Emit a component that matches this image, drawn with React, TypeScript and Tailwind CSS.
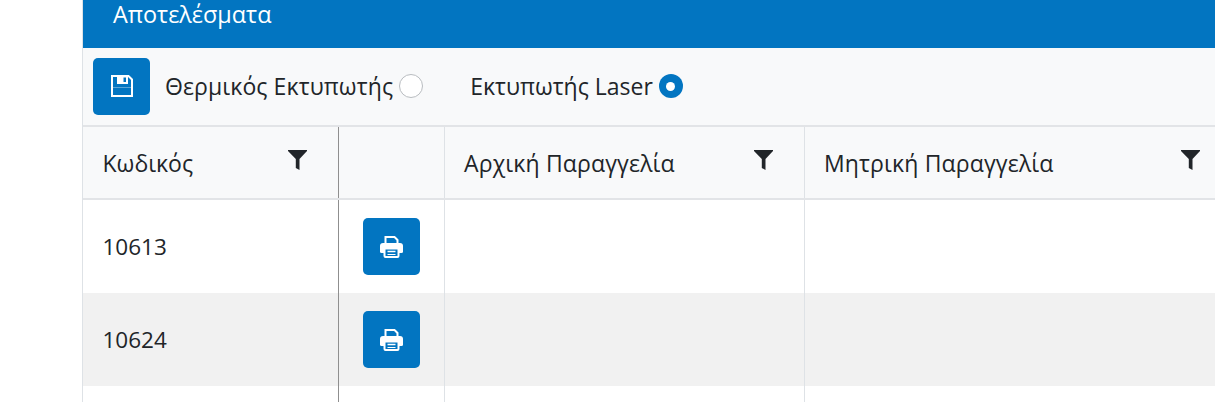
const blue = "bg-[#0275c1]";

function SaveIcon() {
  return (
    <svg width="24" height="24" viewBox="0 0 24 24" aria-hidden="true">
      <path d="M2 2H18.5L22 5.5V22H2Z" fill="none" stroke="#fff" strokeWidth="2" />
      <path d="M7 2H18V10H7Z" fill="#fff" />
      <path d="M13.5 3.5H16V8H13.5Z" fill="#0275c1" />
      <path d="M2 13.5H22" stroke="#fff" strokeWidth="1" opacity="0.35" />
    </svg>
  );
}

function PrintIcon() {
  return (
    <svg width="23" height="22" viewBox="0 0 23 22" aria-hidden="true">
      <path d="M5.5 9V1H14.5L17.5 4V9" fill="none" stroke="#fff" strokeWidth="2" />
      <path d="M3 7H20A3 3 0 0 1 23 10V15.5A1.5 1.5 0 0 1 21.5 17H1.5A1.5 1.5 0 0 1 0 15.5V10A3 3 0 0 1 3 7Z" fill="#fff" />
      <path d="M4.5 12.5H18.5V20A1 1 0 0 1 17.5 21H5.5A1 1 0 0 1 4.5 20Z" fill="#0275c1" stroke="#fff" strokeWidth="2" />
      <path d="M7.5 15.5H15.5" stroke="#fff" strokeWidth="1.5" />
      <path d="M7.5 18.5H15.5" stroke="#fff" strokeWidth="1" />
    </svg>
  );
}

function FilterIcon({ className }: { className: string }) {
  return (
    <svg width="19" height="20" viewBox="0 0 19 20" className={`absolute top-[23px] ${className}`} aria-hidden="true">
      <path d="M0 0H19V1L11.5 9V20L7.8 18V9L0 1Z" fill="#212529" />
    </svg>
  );
}

function HeadCell({ label, className, textClass, iconClass }: { label: string; className: string; textClass: string; iconClass: string }) {
  return (
    <div className={`relative flex items-center ${className}`}>
      <span className={textClass}>{label}</span>
      <FilterIcon className={iconClass} />
    </div>
  );
}

function Row({ code, shaded }: { code: string; shaded?: boolean }) {
  return (
    <div className={`flex h-[93px] ${shaded ? "bg-[#f1f1f1]" : "bg-white"}`}>
      <div className="flex w-[256px] shrink-0 items-center border-r border-[#8f8f8f] pl-[19.5px] pt-[1px] text-[22.5px]">{code}</div>
      <div className="flex w-[106px] shrink-0 items-center justify-center border-r border-[#dee2e6]">
        <button className={`flex h-[57px] w-[57px] items-center justify-center rounded-[5px] ${blue}`}>
          <PrintIcon />
        </button>
      </div>
      <div className="w-[360px] shrink-0 border-r border-[#dee2e6]" />
      <div className="flex-1" />
    </div>
  );
}

export default function App() {
  return (
    <div className="h-[402px] w-[1215px] overflow-hidden bg-white pl-[82px] font-['Open_Sans','Noto_Sans',sans-serif] text-[23px] text-[#212529]">
      <div className="h-full border-l border-[#dee2e6]">
        <div className={`h-[48px] ${blue} pl-[30px] text-[23.4px] leading-[28px] text-white`}>Αποτελέσματα</div>
        <div className="flex h-[77px] items-center bg-[#f8f9fa] pb-[1px] pl-[10px]">
          <button className={`flex h-[57px] w-[57px] items-center justify-center rounded-[5px] ${blue}`}>
            <SaveIcon />
          </button>
          <label className="ml-[15px] flex items-center">
            <span className="tracking-[0.1px]">Θερμικός Εκτυπωτής</span>
            <span className="ml-[6px] h-[24px] w-[24px] rounded-full border border-[#b8bcc0] bg-white" />
          </label>
          <label className="ml-[47px] flex items-center">
            <span>Εκτυπωτής Laser</span>
            <span className="ml-[6px] flex h-[24px] w-[24px] items-center justify-center rounded-full bg-[#0275c1]">
              <span className="h-[9px] w-[9px] rounded-full bg-white" />
            </span>
          </label>
        </div>
        <div className="flex h-[75px] border-y-2 border-[#e2e4e7] bg-[#f8f9fa]">
          <HeadCell label="Κωδικός" className="w-[256px] shrink-0 border-r border-[#8f8f8f] pl-[19.5px] pt-[1px]" textClass="" iconClass="left-[205px]" />
          <div className="w-[106px] shrink-0 border-r border-[#dee2e6]" />
          <HeadCell label="Αρχική Παραγγελία" className="w-[360px] shrink-0 border-r border-[#dee2e6] pl-[19px] pt-[1px]" textClass="tracking-[0.15px]" iconClass="left-[309px]" />
          <HeadCell label="Μητρική Παραγγελία" className="flex-1 pl-[19px] pt-[1px]" textClass="tracking-[0.15px]" iconClass="left-[376px]" />
        </div>
        <Row code="10613" />
        <Row code="10624" shaded />
        <Row code="" />
      </div>
    </div>
  );
}
